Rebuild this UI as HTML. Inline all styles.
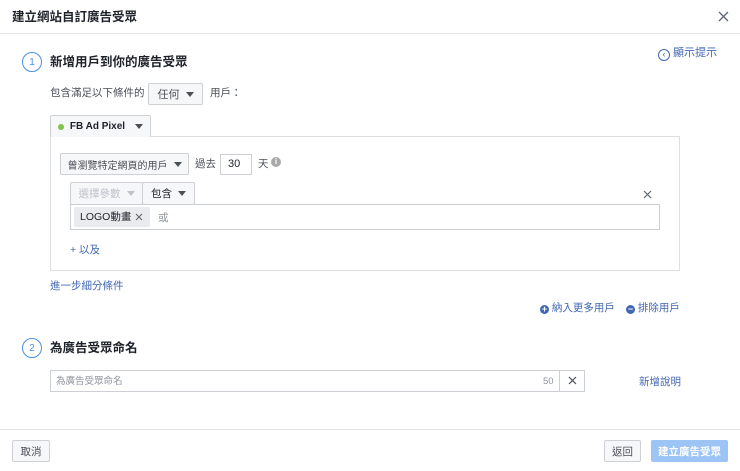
<!DOCTYPE html>
<html><head><meta charset="utf-8"><style>
*{box-sizing:border-box;margin:0;padding:0}
body{width:740px;height:471px;background:#fff;font-family:"Liberation Sans","Noto Sans CJK TC",sans-serif;font-size:10.5px;color:#1d2129;position:relative;overflow:hidden}
.a{position:absolute;white-space:nowrap;line-height:14px}
.btn{position:absolute;background:#f6f7f9;border:1px solid #ced0d4;border-radius:2px;font-size:10.5px;color:#4b4f56;display:flex;align-items:center;justify-content:center;white-space:nowrap}
.tri{display:inline-block;width:0;height:0;border-left:4px solid transparent;border-right:4px solid transparent;border-top:5px solid #4b4f56;margin-left:6px}
.blue{color:#4267b2}
.circ{position:absolute;width:20px;height:20px;border:1.5px solid #4a90e2;border-radius:50%;color:#4a90e2;font-size:10px;display:flex;align-items:center;justify-content:center}
.h{font-size:12.5px;font-weight:bold;color:#1d2129;line-height:18px}
</style></head><body>
<div style="position:absolute;left:0;top:0;width:740px;height:34px;border-bottom:1px solid #e5e5e5"></div>
<div class="a h" style="left:12px;top:8px">建立網站自訂廣告受眾</div>
<svg style="position:absolute;left:718px;top:11px" width="11" height="11"><path d="M1 1L10 10M10 1L1 10" stroke="#606770" stroke-width="1.3"/></svg>

<div class="circ" style="left:22px;top:52px">1</div>
<div class="a h" style="left:50px;top:53px">新增用戶到你的廣告受眾</div>
<div class="a blue" style="left:658px;top:46px;font-size:11px"><span style="display:inline-block;width:12px;height:12px;border:1.3px solid #4267b2;border-radius:50%;font-size:9px;line-height:9px;text-align:center;vertical-align:-1px">‹</span> 顯示提示</div>

<div class="a" style="left:50px;top:86px;color:#4b4f56">包含滿足以下條件的</div>
<div class="btn" style="left:148px;top:83px;width:55px;height:22px;font-size:11px">任何<span class="tri"></span></div>
<div class="a" style="left:210px;top:86px;color:#4b4f56">用戶：</div>

<div style="position:absolute;left:50px;top:136px;width:630px;height:135px;border:1px solid #dddfe2"></div>
<div class="btn" style="left:50px;top:115px;width:101px;height:22px;border-bottom:none;color:#1d2129;font-weight:bold;font-size:10px"><span style="width:6px;height:6px;border-radius:50%;background:#7fc44a;margin-right:6px"></span>FB Ad Pixel<span class="tri" style="margin-left:10px"></span></div>

<div class="btn" style="left:60px;top:153px;width:129px;height:22px;font-size:10px">曾瀏覽特定網頁的用戶<span class="tri"></span></div>
<div class="a" style="left:195px;top:157px;color:#4b4f56">過去</div>
<div style="position:absolute;left:220px;top:154px;width:32px;height:21px;border:1px solid #ccd0d5;font-size:11px;padding:3px 0 0 7px">30</div>
<div class="a" style="left:258px;top:157px;color:#4b4f56">天</div>
<div class="a" style="left:271px;top:157px;width:10px;height:10px;border-radius:50%;background:#aaa;color:#fff;font-size:8px;text-align:center;line-height:10px;font-weight:bold">i</div>

<div class="btn" style="left:70px;top:182px;width:73px;height:23px;color:#bec3c9">選擇參數<span class="tri" style="border-top-color:#bec3c9"></span></div>
<div class="btn" style="left:142px;top:182px;width:53px;height:23px;color:#1d2129">包含<span class="tri"></span></div>
<svg style="position:absolute;left:643px;top:190px" width="9" height="9"><path d="M1 1L8 8M8 1L1 8" stroke="#606770" stroke-width="1.2"/></svg>
<div style="position:absolute;left:70px;top:204px;width:590px;height:26px;border:1px solid #ccd0d5"></div>
<div class="a" style="left:74px;top:207px;width:76px;height:20px;background:#e9ebee;border-radius:2px;padding:3px 0 0 6px;color:#1d2129;font-size:10.5px">LOGO動畫</div>
<svg style="position:absolute;left:135px;top:213px" width="8" height="8"><path d="M1 1L7 7M7 1L1 7" stroke="#606770" stroke-width="1.1"/></svg>
<div class="a" style="left:158px;top:211px;color:#90949c">或</div>
<div class="a blue" style="left:70px;top:243px">+ 以及</div>

<div class="a blue" style="left:50px;top:279px">進一步細分條件</div>
<div class="a blue" style="left:540px;top:301px"><span style="display:inline-block;width:9px;height:9px;border-radius:50%;background:#4267b2;color:#fff;font-size:9px;line-height:9px;text-align:center;font-weight:bold;vertical-align:-1px">+</span> 納入更多用戶</div>
<div class="a blue" style="left:626px;top:301px"><span style="display:inline-block;width:9px;height:9px;border-radius:50%;background:#4267b2;color:#fff;font-size:9px;line-height:8px;text-align:center;font-weight:bold;vertical-align:-1px">−</span> 排除用戶</div>

<div class="circ" style="left:22px;top:338px">2</div>
<div class="a h" style="left:50px;top:339px">為廣告受眾命名</div>
<div style="position:absolute;left:50px;top:370px;width:535px;height:22px;border:1px solid #ccd0d5"></div>
<div style="position:absolute;left:559px;top:370px;width:1px;height:22px;background:#ccd0d5"></div>
<div class="a" style="left:56px;top:375px;font-size:9.5px;color:#90949c">為廣告受眾命名</div>
<div class="a" style="left:543px;top:375px;font-size:9.5px;color:#90949c">50</div>
<svg style="position:absolute;left:568px;top:376px" width="9" height="9"><path d="M1 1L8 8M8 1L1 8" stroke="#4b4f56" stroke-width="1.2"/></svg>
<div class="a blue" style="left:639px;top:375px">新增說明</div>

<div style="position:absolute;left:0;top:429px;width:740px;height:1px;background:#e5e5e5"></div>
<div class="btn" style="left:12px;top:440px;width:38px;height:22px">取消</div>
<div class="btn" style="left:604px;top:440px;width:37px;height:22px">返回</div>
<div class="btn" style="left:651px;top:440px;width:77px;height:22px;background:#9cc4f5;border-color:#9cc4f5;color:#fff;font-weight:bold">建立廣告受眾</div>
</body></html>
